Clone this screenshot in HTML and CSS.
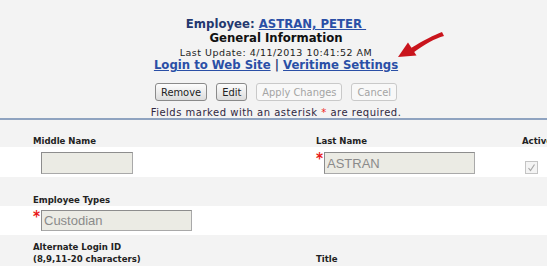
FILE: index.html
```html
<!DOCTYPE html>
<html lang="en">

<head>
    <meta charset="UTF-8" />
    <title>Employee - General Information</title>
    <link rel="stylesheet" href="styles.css">
</head>

<body>
    <div class="page">
        <header class="emp-header">
            <div class="emp-title">Employee: <a href="#" class="emp-link">ASTRAN, PETER&nbsp;</a></div>
            <div class="emp-subtitle">General Information</div>
            <div class="emp-updated">Last Update: 4/11/2013 10:41:52 AM</div>
            <div class="emp-links">
                <a href="#">Login to Web Site</a> | <a href="#">Veritime Settings</a>
            </div>

            <div class="toolbar">
                <button type="button" class="btn">Remove</button>
                <button type="button" class="btn">Edit</button>
                <button type="button" class="btn" disabled>Apply Changes</button>
                <button type="button" class="btn" disabled>Cancel</button>
            </div>
            <div class="required-note">Fields marked with an asterisk <span class="req">*</span> are required.</div>

            <!-- callout arrow drawn over the page -->
            <svg class="callout-arrow" width="52" height="36" viewBox="0 0 52 36">
                <path d="M48 4 C40 7 30 12 17 20 L19.5 24.5 C31 16 41 10.5 50 8 Z" fill="#c9141c" />
                <path d="M4 29 L14 14.5 L22.5 27.5 Z" fill="#c9141c" />
            </svg>
        </header>

        <main class="emp-form">
            <div class="row row-labels row-first">
                <div>Middle Name</div>
                <div>Last Name</div>
                <div>Active</div>
            </div>
            <div class="row row-fields">
                <div class="field"><span class="req-slot"></span><input class="input input-short" type="text" value="" disabled></div>
                <div class="field"><span class="req-slot">*</span><input class="input input-long" type="text" value="ASTRAN" disabled></div>
                <div class="field field-check">
                    <span class="checkbox">
                        <svg width="9" height="9" viewBox="0 0 9 9"><path d="M1.5 5 L3.5 7.5 L7.5 1.5" fill="none" stroke="#a8a8a8" stroke-width="1.2" /></svg>
                    </span>
                </div>
            </div>

            <div class="row row-labels">
                <div>Employee Types</div>
            </div>
            <div class="row row-fields row-tight">
                <div class="field"><span class="req-slot">*</span><input class="input input-long" type="text" value="Custodian" disabled></div>
            </div>

            <div class="row row-labels row-open">
                <div>Alternate Login ID<br>(8,9,11-20 characters)</div>
                <div>Title</div>
            </div>
        </main>
    </div>
</body>

</html>
```

FILE: styles.css
```css
body {
    margin: 0;
    padding: 0;
    font-family: 'DejaVu Sans Condensed', 'DejaVu Sans', sans-serif;
    background: #f3f3f3;
    color: #222222;
    overflow: hidden;
}

.emp-header {
    position: relative;
    padding: 17px 0 0 5px;
    text-align: center;
    border-bottom: 2px solid #8fa3c0;
}

.emp-title,
.emp-subtitle,
.emp-links {
    font-size: 13px;
    font-weight: bold;
    line-height: 14px;
}

.emp-title {
    color: #24386f;
}

.emp-subtitle {
    color: #111111;
}

.emp-updated {
    font-family: 'DejaVu Sans', sans-serif;
    font-size: 9.5px;
    letter-spacing: 0.5px;
    line-height: 10px;
    margin-top: 3px;
    color: #222222;
}

.emp-links {
    color: #24386f;
}

.emp-header a {
    color: #2a4fa6;
    text-decoration: underline;
}

.toolbar {
    display: flex;
    justify-content: center;
    gap: 9px;
    margin-top: 11px;
}

.btn {
    height: 18px;
    padding: 0 5px;
    font-family: inherit;
    font-size: 11px;
    color: #222222;
    background: linear-gradient(#fdfdfd, #dcdcdc);
    border: 1px solid #8a8a8a;
    border-radius: 3px;
}

.btn:disabled {
    color: #a4a4a4;
    background: #f8f8f8;
    border-color: #c9c9c9;
}

.required-note {
    font-family: 'DejaVu Sans', sans-serif;
    font-size: 10px;
    letter-spacing: 0.5px;
    line-height: 11px;
    margin-top: 6px;
    color: #30283f;
}

.req {
    color: #ee2222;
}

.callout-arrow {
    position: absolute;
    left: 394px;
    top: 28px;
}

.row {
    display: grid;
    grid-template-columns: 283px 206px 1fr;
    padding-left: 33px;
    white-space: nowrap;
}

.row-labels {
    box-sizing: border-box;
    height: 29px;
    align-items: end;
    background: #f3f3f3;
    font-size: 9.5px;
    font-weight: bold;
    line-height: 12px;
}

.row-first {
    height: 27px;
}

.row-open {
    height: auto;
    padding-top: 6px;
}

.row-fields {
    height: 30px;
    align-items: start;
    background: #ffffff;
    padding-top: 5px;
    box-sizing: border-box;
}

.row-tight {
    height: 29px;
    padding-top: 4px;
}

.field {
    display: flex;
    align-items: flex-start;
}

.req-slot {
    width: 8px;
    flex: none;
    color: #e81818;
    font-size: 15px;
    font-weight: bold;
    line-height: 14px;
}

.input {
    box-sizing: border-box;
    height: 22px;
    padding: 0 2px;
    font-family: 'Liberation Sans', Arial, sans-serif;
    font-size: 13px;
    color: #8a8a8a;
    background: #ebebe4;
    border: 1px solid #a9a9a9;
    border-top-color: #8d8d8d;
    border-left-color: #8d8d8d;
}

.input-short {
    width: 92px;
}

.input-long {
    width: 151px;
}

.row-tight .input {
    height: 21px;
}

.field-check {
    padding: 9px 0 0 3px;
}

.checkbox {
    display: flex;
    align-items: center;
    justify-content: center;
    box-sizing: border-box;
    width: 13px;
    height: 13px;
    background: #f4f4f4;
    border: 1px solid #c4c4c4;
}
```
